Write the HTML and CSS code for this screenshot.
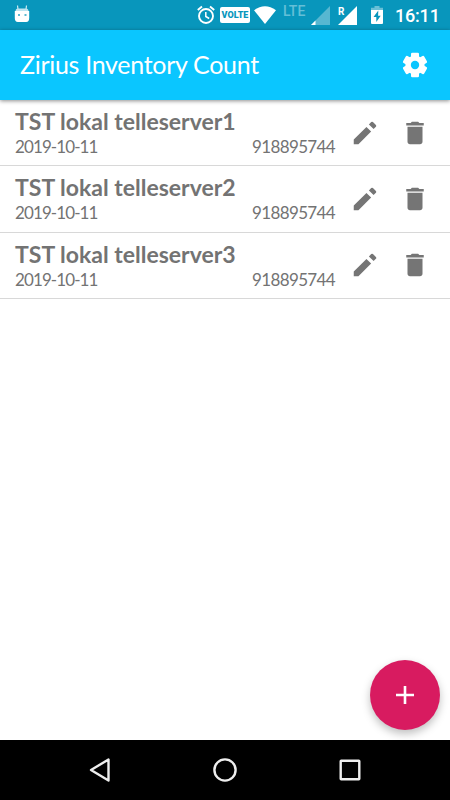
FILE: index.html
```
<!DOCTYPE html>
<html lang="en">
<head>
    <meta charset="UTF-8">
    <meta name="viewport" content="width=device-width, initial-scale=1.0">
    <title>Zirius Inventory Count</title>
    <link rel="stylesheet" href="styles.css">
</head>
<body>

<!-- Shared icons -->
<svg class="defs">
    <symbol id="edit" viewBox="0 0 24 24">
        <path d="M3 17.25V21h3.75L16.900 10.850l-3.75-3.75L3 17.25zM20.71 7.04a1 1 0 0 0 0-1.41l-2.34-2.34a1 1 0 0 0-1.41 0l-1.83 1.83 3.75 3.75 1.83-1.83z"/>
    </symbol>
    <symbol id="delete" viewBox="0 0 24 24">
        <path d="M6 19c0 1.1.9 2 2 2h8c1.1 0 2-.9 2-2V7H6v12zM19 4h-3.5l-1-1h-5l-1 1H5v2h14V4z"/>
    </symbol>
</svg>

<div class="screen">
    <div class="status-bar">
        <svg class="robot" width="16" height="18" viewBox="0 0 16 18">
            <path d="M4 4.500L3.500 .5M12 4.500L12.500 .5" stroke="#fff" stroke-opacity=".8" stroke-width="1.200"/>
            <path d="M1.500 6.500Q1.500 3.500 4 3.500h8q2.500 0 2.500 3z" fill="#bfe4ef"/>
            <path d="M.8 6h14.400v7q0 4-3 4H3.800q-3 0-3-4z" fill="#fff"/>
            <path d="M4 9h2v2H4zM10.500 9h2v2h-2z" fill="#5cb9d2"/>
        </svg>
        <svg class="alarm" width="18" height="20" viewBox="0 0 18 20" fill="none" stroke="#fff">
            <circle cx="9" cy="11" r="7" stroke-width="1.900"/>
            <path d="M.8 5L5 1.500M17.200 5L13 1.500" stroke-width="1.900"/>
            <path d="M8.800 7v4.500l3.400 2" stroke-width="1.500"/>
        </svg>
        <span class="volte">VOLTE</span>
        <svg class="wifi" width="22" height="18" viewBox="0 0 22 18">
            <path d="M0 4.300Q11-3.700 22 4.300L11 18z" fill="#fff"/>
        </svg>
        <span class="lte">LTE</span>
        <svg class="signal" width="19" height="19" viewBox="0 0 19 19">
            <path d="M0 19L19 0v19z" fill="#fff" fill-opacity=".32"/>
            <path d="M0 19l4.500-4.500V19z" fill="#fff"/>
        </svg>
        <span class="roaming">R</span>
        <svg class="signal-full" width="19" height="19" viewBox="0 0 19 19">
            <path d="M0 19L19 0v19z" fill="#fff"/>
        </svg>
        <svg class="battery" width="12" height="18" viewBox="0 0 12 18">
            <path d="M0 4V1.800h3.500V0h5v1.800H12V4z" fill="#fff" fill-opacity=".4"/>
            <path d="M0 4h12v13q0 1-1 1H1q-1 0-1-1z" fill="#fff"/>
            <path d="M7.300 4.500L2.500 11h2.800v5l4.400-6.200H7.100z" fill="#0896bc"/>
        </svg>
        <span class="clock">16:11</span>
    </div>

    <header class="app-bar">
        <h1>Zirius Inventory Count</h1>
        <svg class="gear" width="30" height="30" viewBox="-15 -15 30 30">
            <g fill="#fff">
                <rect x="-4" y="-12.200" width="8" height="24.400" rx="1.300"/>
                <rect x="-4" y="-12.200" width="8" height="24.400" rx="1.300" transform="rotate(60)"/>
                <rect x="-4" y="-12.200" width="8" height="24.400" rx="1.300" transform="rotate(120)"/>
                <circle r="9.600"/>
            </g>
            <circle r="4.200" fill="#0ac6ff"/>
        </svg>
    </header>

    <ul class="list">
        <li>
            <div class="info">
                <h2>TST lokal telleserver1</h2>
                <div class="details"><span class="date">2019-10-11</span><span class="number">918895744</span></div>
            </div>
            <svg class="icon"><use href="#edit"/></svg>
            <svg class="icon"><use href="#delete"/></svg>
        </li>
        <li>
            <div class="info">
                <h2>TST lokal telleserver2</h2>
                <div class="details"><span class="date">2019-10-11</span><span class="number">918895744</span></div>
            </div>
            <svg class="icon"><use href="#edit"/></svg>
            <svg class="icon"><use href="#delete"/></svg>
        </li>
        <li>
            <div class="info">
                <h2>TST lokal telleserver3</h2>
                <div class="details"><span class="date">2019-10-11</span><span class="number">918895744</span></div>
            </div>
            <svg class="icon"><use href="#edit"/></svg>
            <svg class="icon"><use href="#delete"/></svg>
        </li>
    </ul>

    <div class="fab">
        <svg width="18" height="18" viewBox="0 0 18 18"><path d="M9 0v18M0 9h18" stroke="#fff" stroke-width="2.600"/></svg>
    </div>

    <nav class="nav-bar">
        <svg width="30" height="30" viewBox="0 0 30 30"><path d="M6 15L23.500 4.500v21z"/></svg>
        <svg width="30" height="30" viewBox="0 0 30 30"><circle cx="15" cy="15" r="10.600"/></svg>
        <svg width="30" height="30" viewBox="0 0 30 30"><rect x="5.700" y="5.700" width="18.600" height="18.600" rx=".5"/></svg>
    </nav>
</div>

</body>
</html>
```
FILE: styles.css
```
/* Global Styles */
body {
    margin: 0;
    background: #fff;
    font-family: Lato, sans-serif;
    color: #737373;
}

.defs {
    display: none;
}

.screen {
    position: relative;
    display: flex;
    flex-direction: column;
    width: 450px;
    height: 800px;
    overflow: hidden;
}

svg {
    flex: none;
}

/* Status bar */
.status-bar {
    display: flex;
    align-items: flex-start;
    height: 30px;
    flex: none;
    background: #0896bc;
    color: #fff;
    font-family: Roboto, sans-serif;
}

.robot {
    margin: 5px 0 0 14px;
}

.alarm {
    margin: 5px 0 0 167px;
}

.volte {
    width: 30px;
    height: 16px;
    margin: 7px 0 0 5px;
    border-radius: 2px;
    background: #fff;
    color: #0896bc;
    font-size: 9px;
    font-weight: 900;
    line-height: 16px;
    text-align: center;
}

.wifi {
    margin: 6px 0 0 4px;
}

.lte {
    width: 23px;
    margin: 4px 0 0 7px;
    color: #64bfd7;
    font-size: 14px;
    font-weight: 500;
    line-height: 15px;
}

.signal {
    margin: 6px 0 0 5px;
}

.roaming {
    width: 7px;
    margin: 6px 0 0 8px;
    font-size: 10px;
    font-weight: 700;
    line-height: 11px;
}

.signal-full {
    margin: 6px 0 0 -7px;
}

.battery {
    margin: 6px 0 0 14px;
}

.clock {
    margin: 5px 0 0 12px;
    font-size: 18px;
    font-weight: 500;
    line-height: 21px;
    letter-spacing: -0.2px;
}

/* App bar */
.app-bar {
    position: relative;
    display: flex;
    align-items: center;
    justify-content: space-between;
    flex: none;
    height: 70px;
    padding: 0 20px;
    box-sizing: border-box;
    background: #0ac6ff;
    box-shadow: 0 1px 4px rgba(0, 0, 0, 0.45);
}

h1 {
    margin: 0 0 2px;
    color: #fff;
    font-size: 25px;
    font-weight: 400;
    letter-spacing: -0.3px;
    white-space: nowrap;
}

/* List */
.list {
    flex: 1;
    margin: 0;
    padding: 0;
    list-style: none;
}

.list li {
    display: flex;
    height: 66.250px;
    padding: 0 20px 0 15px;
    box-sizing: border-box;
    border-bottom: 1px solid #d8d8d8;
}

.info {
    width: 320px;
    margin-right: 15px;
}

h2 {
    margin: 7px 0 0;
    font-size: 23px;
    font-weight: 700;
    line-height: 28px;
    white-space: nowrap;
}

.details {
    display: flex;
    justify-content: space-between;
    margin-top: 1px;
    font-size: 17px;
    line-height: 22px;
}

.date {
    letter-spacing: -0.9px;
}

.number {
    letter-spacing: -0.65px;
}

.icon {
    width: 30px;
    height: 30px;
    margin-top: 17.500px;
    fill: #757575;
}

.icon + .icon {
    margin-left: 20px;
}

/* Add button */
.fab {
    position: absolute;
    right: 10px;
    bottom: 70px;
    display: flex;
    align-items: center;
    justify-content: center;
    width: 70px;
    height: 70px;
    border-radius: 50%;
    background: #d81b60;
    box-shadow: 0 4px 8px rgba(0, 0, 0, 0.25);
}

/* Navigation bar */
.nav-bar {
    position: relative;
    display: flex;
    align-items: center;
    justify-content: space-between;
    flex: none;
    height: 60px;
    padding: 0 85px;
    background: #000;
}

.nav-bar svg {
    fill: none;
    stroke: #eee;
    stroke-width: 2.400;
    stroke-linejoin: round;
}
```
